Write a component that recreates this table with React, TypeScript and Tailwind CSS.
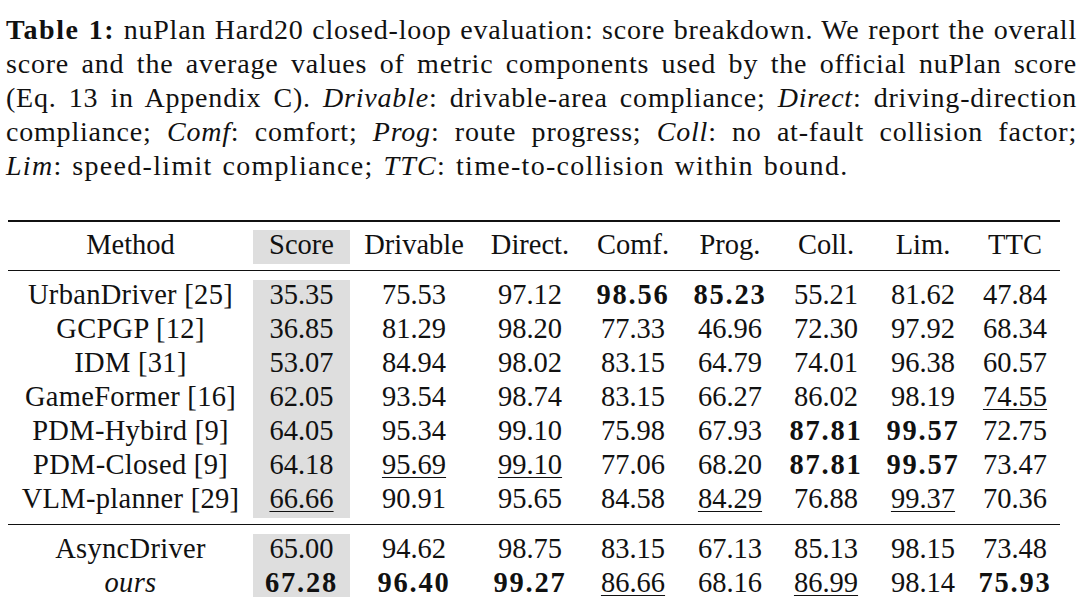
import React from "react";

type Row = {
    method: string;
    italic?: boolean;
    cells: string[];
};

// "*" = bold, "_" = underlined
const topRows: Row[] = [
    { method: "UrbanDriver [25]", cells: ["35.35", "75.53", "97.12", "*98.56", "*85.23", "55.21", "81.62", "47.84"] },
    { method: "GCPGP [12]", cells: ["36.85", "81.29", "98.20", "77.33", "46.96", "72.30", "97.92", "68.34"] },
    { method: "IDM [31]", cells: ["53.07", "84.94", "98.02", "83.15", "64.79", "74.01", "96.38", "60.57"] },
    { method: "GameFormer [16]", cells: ["62.05", "93.54", "98.74", "83.15", "66.27", "86.02", "98.19", "_74.55"] },
    { method: "PDM-Hybird [9]", cells: ["64.05", "95.34", "99.10", "75.98", "67.93", "*87.81", "*99.57", "72.75"] },
    { method: "PDM-Closed [9]", cells: ["64.18", "_95.69", "_99.10", "77.06", "68.20", "*87.81", "*99.57", "73.47"] },
    { method: "VLM-planner [29]", cells: ["_66.66", "90.91", "95.65", "84.58", "_84.29", "76.88", "_99.37", "70.36"] },
];

const bottomRows: Row[] = [
    { method: "AsyncDriver", cells: ["65.00", "94.62", "98.75", "83.15", "67.13", "85.13", "98.15", "73.48"] },
    { method: "ours", italic: true, cells: ["*67.28", "*96.40", "*99.27", "_86.66", "68.16", "_86.99", "98.14", "*75.93"] },
];

const headers = ["Method", "Score", "Drivable", "Direct.", "Comf.", "Prog.", "Coll.", "Lim.", "TTC"];

const gridCols = "grid grid-cols-[245px_97px_128px_104px_102px_92px_100px_94px_90px]";

function Cell({ value, shaded }: { value: string; shaded?: boolean }) {
    const bold = value.startsWith("*");
    const under = value.startsWith("_");
    const text = bold || under ? value.slice(1) : value;
    return (
        <div className={`h-[34px] leading-[29px] text-center ${shaded ? "bg-[#dedede]" : ""}`}>
            <span className={bold ? "font-bold tracking-[1.8px]" : under ? "underline decoration-1 underline-offset-[3px]" : ""}>
                {text}
            </span>
        </div>
    );
}

function TableRow({ row }: { row: Row }) {
    return (
        <div className={gridCols}>
            <div className={`h-[34px] leading-[29px] text-center tracking-[0.3px] ${row.italic ? "italic" : ""}`}>{row.method}</div>
            {row.cells.map((c, i) => (
                <Cell key={i} value={c} shaded={i === 0} />
            ))}
        </div>
    );
}

function Line({ children, last }: { children: React.ReactNode; last?: boolean }) {
    return (
        <div
            className={`h-[34px] leading-[34px] whitespace-nowrap ${
                last ? "text-left tracking-[1.3px] [word-spacing:1.5px]" : "tracking-[0.8px] text-justify [text-align-last:justify]"
            }`}
        >
            {children}
        </div>
    );
}

export default function App() {
    return (
        <div className="w-[1080px] h-[597px] overflow-hidden bg-white text-[#111] font-['Liberation_Serif','Times_New_Roman',serif]">
            <div className="pt-[12.5px] pl-[6px] pr-[3px] text-[28px]">
                <Line><b className="tracking-[1.5px]">Table 1:</b> nuPlan Hard20 closed-loop evaluation: score breakdown. We report the overall</Line>
                <Line>score and the average values of metric components used by the official nuPlan score</Line>
                <Line>(Eq. 13 in Appendix C). <i>Drivable</i>: drivable-area compliance; <i>Direct</i>: driving-direction</Line>
                <Line>compliance; <i>Comf</i>: comfort; <i>Prog</i>: route progress; <i>Coll</i>: no at-fault collision factor;</Line>
                <Line last><i>Lim</i>: speed-limit compliance; <i>TTC</i>: time-to-collision within bound.</Line>
            </div>

            <div className="ml-[8px] w-[1052px] mt-[37.5px] text-[28.5px]">
                <div className="h-[2px] bg-[#111]" />
                <div className={`${gridCols} mt-[8px]`}>
                    {headers.map((h, i) => (
                        <div key={h} className={`h-[34px] leading-[29px] text-center ${i === 1 ? "bg-[#dedede]" : ""}`}>{h}</div>
                    ))}
                </div>
                <div className="h-px bg-[#111] mt-[6px]" />
                <div className="mt-[9px]">
                    {topRows.map(r => <TableRow key={r.method} row={r} />)}
                </div>
                <div className="h-px bg-[#111] mt-[6px]" />
                <div className="mt-[9px]">
                    {bottomRows.map(r => <TableRow key={r.method} row={r} />)}
                </div>
            </div>
        </div>
    );
}
